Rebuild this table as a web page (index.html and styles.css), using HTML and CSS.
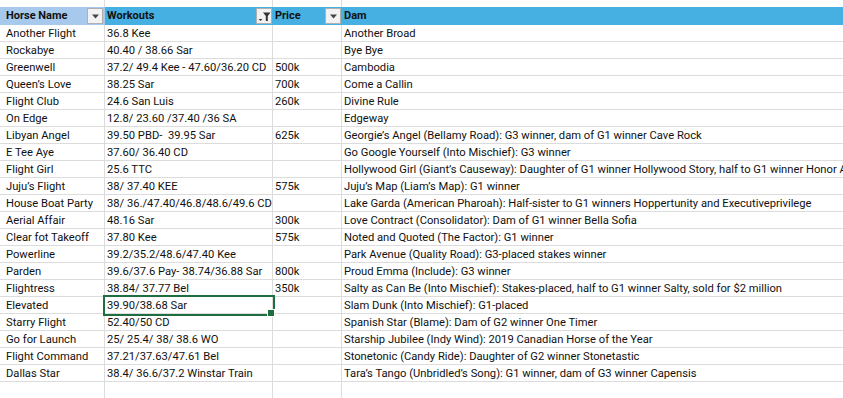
FILE: index.html
```html
<!DOCTYPE html>
<html>
<head>
<meta charset="utf-8">
<link rel="stylesheet" href="styles.css">
</head>
<body>
<div class="sheet">
  <div class="row top"><div class="c c1"></div><div class="c c2"></div><div class="c c3"></div><div class="c c4"></div></div>
  <div class="row head">
    <div class="c c1 h hl"><span>Horse Name</span><span class="btn"><svg width="9" height="5" viewBox="0 0 9 5"><path d="M1 0.5h7L4.5 4.5z" fill="#444"/></svg></span></div>
    <div class="c c2 h"><span>Workouts</span><span class="btn"><svg width="13" height="11" viewBox="0 0 13 11"><path d="M5 1.5h7.5L9.8 5v5H7.8V5z" fill="#333"/><path d="M0.5 8h4L2.5 10z" fill="#333"/></svg></span></div>
    <div class="c c3 h"><span>Price</span><span class="btn"><svg width="9" height="5" viewBox="0 0 9 5"><path d="M1 0.5h7L4.5 4.5z" fill="#444"/></svg></span></div>
    <div class="c c4 h"><span>Dam</span></div>
  </div>
  <div class="row"><div class="c c1">Another Flight</div><div class="c c2">36.8 Kee</div><div class="c c3"></div><div class="c c4">Another Broad</div></div>
  <div class="row"><div class="c c1">Rockabye</div><div class="c c2">40.40 / 38.66 Sar</div><div class="c c3"></div><div class="c c4">Bye Bye</div></div>
  <div class="row"><div class="c c1">Greenwell</div><div class="c c2">37.2/ 49.4 Kee - 47.60/36.20 CD</div><div class="c c3">500k</div><div class="c c4">Cambodia</div></div>
  <div class="row"><div class="c c1">Queen’s Love</div><div class="c c2">38.25 Sar</div><div class="c c3">700k</div><div class="c c4">Come a Callin</div></div>
  <div class="row"><div class="c c1">Flight Club</div><div class="c c2">24.6 San Luis</div><div class="c c3">260k</div><div class="c c4">Divine Rule</div></div>
  <div class="row"><div class="c c1">On Edge</div><div class="c c2">12.8/ 23.60 /37.40 /36 SA</div><div class="c c3"></div><div class="c c4">Edgeway</div></div>
  <div class="row"><div class="c c1">Libyan Angel</div><div class="c c2">39.50 PBD-&nbsp; 39.95 Sar</div><div class="c c3">625k</div><div class="c c4">Georgie’s Angel (Bellamy Road): G3 winner, dam of G1 winner Cave Rock</div></div>
  <div class="row"><div class="c c1">E Tee Aye</div><div class="c c2">37.60/ 36.40 CD</div><div class="c c3"></div><div class="c c4">Go Google Yourself (Into Mischief): G3 winner</div></div>
  <div class="row"><div class="c c1">Flight Girl</div><div class="c c2">25.6 TTC</div><div class="c c3"></div><div class="c c4">Hollywood Girl (Giant’s Causeway): Daughter of G1 winner Hollywood Story, half to G1 winner Honor A. P.</div></div>
  <div class="row"><div class="c c1">Juju’s Flight</div><div class="c c2">38/ 37.40 KEE</div><div class="c c3">575k</div><div class="c c4">Juju’s Map (Liam’s Map): G1 winner</div></div>
  <div class="row"><div class="c c1">House Boat Party</div><div class="c c2">38/ 36./47.40/46.8/48.6/49.6 CD</div><div class="c c3"></div><div class="c c4">Lake Garda (American Pharoah): Half-sister to G1 winners Hoppertunity and Executiveprivilege</div></div>
  <div class="row"><div class="c c1">Aerial Affair</div><div class="c c2">48.16 Sar</div><div class="c c3">300k</div><div class="c c4">Love Contract (Consolidator): Dam of G1 winner Bella Sofia</div></div>
  <div class="row"><div class="c c1">Clear fot Takeoff</div><div class="c c2">37.80 Kee</div><div class="c c3">575k</div><div class="c c4">Noted and Quoted (The Factor): G1 winner</div></div>
  <div class="row"><div class="c c1">Powerline</div><div class="c c2">39.2/35.2/48.6/47.40 Kee</div><div class="c c3"></div><div class="c c4">Park Avenue (Quality Road): G3-placed stakes winner</div></div>
  <div class="row"><div class="c c1">Parden</div><div class="c c2">39.6/37.6 Pay- 38.74/36.88 Sar</div><div class="c c3">800k</div><div class="c c4">Proud Emma (Include): G3 winner</div></div>
  <div class="row"><div class="c c1">Flightress</div><div class="c c2">38.84/ 37.77 Bel</div><div class="c c3">350k</div><div class="c c4">Salty as Can Be (Into Mischief): Stakes-placed, half to G1 winner Salty, sold for $2 million</div></div>
  <div class="row"><div class="c c1">Elevated</div><div class="c c2 sel">39.90/38.68 Sar<span class="handle"></span></div><div class="c c3"></div><div class="c c4">Slam Dunk (Into Mischief): G1-placed</div></div>
  <div class="row"><div class="c c1">Starry Flight</div><div class="c c2">52.40/50 CD</div><div class="c c3"></div><div class="c c4">Spanish Star (Blame): Dam of G2 winner One Timer</div></div>
  <div class="row"><div class="c c1">Go for Launch</div><div class="c c2">25/ 25.4/ 38/ 38.6 WO</div><div class="c c3"></div><div class="c c4">Starship Jubilee (Indy Wind): 2019 Canadian Horse of the Year</div></div>
  <div class="row"><div class="c c1">Flight Command</div><div class="c c2">37.21/37.63/47.61 Bel</div><div class="c c3"></div><div class="c c4">Stonetonic (Candy Ride): Daughter of G2 winner Stonetastic</div></div>
  <div class="row"><div class="c c1">Dallas Star</div><div class="c c2">38.4/ 36.6/37.2 Winstar Train</div><div class="c c3"></div><div class="c c4">Tara’s Tango (Unbridled’s Song): G1 winner, dam of G3 winner Capensis</div></div>
  <div class="row"><div class="c c1"></div><div class="c c2"></div><div class="c c3"></div><div class="c c4"></div></div>
</div>
</body>
</html>
```

FILE: styles.css
```css
html, body {
  margin: 0;
  padding: 0;
  background: #fff;
}
.sheet {
  width: 843px;
  height: 398px;
  overflow: hidden;
  font-family: Roboto, "Liberation Sans", sans-serif;
  font-size: 11.2px;
  color: #111;
}
.row {
  display: grid;
  grid-template-columns: 105px 168px 69px 1fr;
  height: 17px;
  border-bottom: 1px solid #dcdcdc;
  box-sizing: border-box;
}
.row.top {
  height: 7px;
  border-bottom: none;
}
.row.head {
  height: 18px;
  border-bottom: none;
}
.c {
  position: relative;
  box-sizing: border-box;
  border-right: 1px solid #dcdcdc;
  padding-left: 2px;
  padding-top: 1px;
  line-height: 16px;
  white-space: nowrap;
  overflow: visible;
}
.c1 { padding-left: 6px; }
.c4 { border-right: none; }
.h {
  background: #45b0e1;
  font-size: 11px;
  font-weight: bold;
  line-height: 18px;
  padding-top: 0;
  border-right: none;
  display: flex;
  justify-content: space-between;
  align-items: center;
  padding-right: 1px;
}
.h.hl {
  background: #a6c9ec;
  padding-right: 2px;
}
.btn {
  width: 16px;
  height: 16px;
  box-sizing: border-box;
  background: #f2f2f2;
  border: 1px solid #b0b0b0;
  display: flex;
  align-items: center;
  justify-content: center;
}
.sel {
  outline: 2px solid #1e6e42;
  outline-offset: 0;
  z-index: 2;
}
.handle {
  position: absolute;
  right: -3px;
  bottom: -3px;
  width: 6px;
  height: 6px;
  background: #1e6e42;
  border: 1px solid #fff;
}
```
